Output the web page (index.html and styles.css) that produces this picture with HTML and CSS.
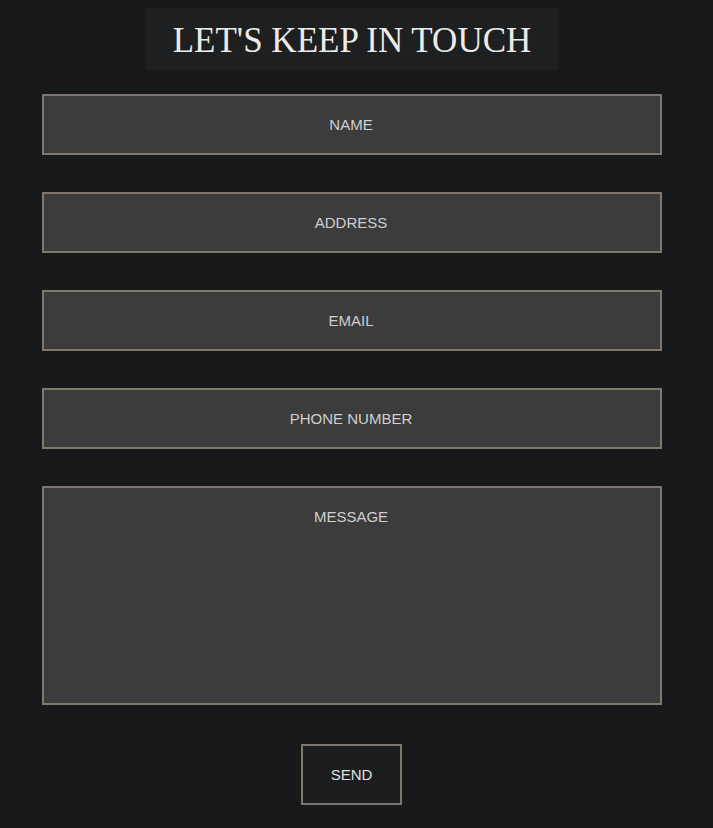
FILE: index.html
```html
<!DOCTYPE html>
<html>
<head>
<meta charset="utf-8">
<link rel="stylesheet" href="styles.css">
</head>
<body>
<div class="page">
  <div class="title-wrap">
    <h1 class="title">LET'S KEEP IN TOUCH</h1>
  </div>
  <form class="form">
    <input class="field" type="text" placeholder="NAME">
    <input class="field" type="text" placeholder="ADDRESS">
    <input class="field" type="text" placeholder="EMAIL">
    <input class="field" type="text" placeholder="PHONE NUMBER">
    <textarea class="field message" placeholder="MESSAGE"></textarea>
    <div class="actions">
      <button class="send" type="button">SEND</button>
    </div>
  </form>
</div>
</body>
</html>
```
FILE: styles.css
```css
html, body {
  margin: 0;
  padding: 0;
  background: #18191b;
}
.page {
  width: 620px;
  margin-left: 42px;
  padding-top: 8px;
  font-family: "Liberation Sans", Arial, sans-serif;
}
.title-wrap {
  display: flex;
  justify-content: center;
}
.title {
  margin: 0;
  height: 62px;
  box-sizing: border-box;
  padding: 2px 0 0;
  background: #1e1f21;
  font-family: "Liberation Serif", "Times New Roman", serif;
  font-weight: normal;
  font-size: 35px;
  line-height: 62px;
  color: #ecebe6;
  width: 414px;
  text-align: center;
  white-space: nowrap;
}
.form {
  margin-top: 24px;
  display: flex;
  flex-direction: column;
  gap: 37px;
}
.field {
  display: block;
  width: 620px;
  height: 61px;
  box-sizing: border-box;
  margin: 0;
  border: 2px solid #7f776b;
  background: #3c3c3c;
  color: #d0d0d0;
  font-family: "Liberation Sans", Arial, sans-serif;
  font-size: 15px;
  text-align: center;
  outline: none;
  padding: 0 12px 0 10px;
}
.field::placeholder {
  color: #cfcfcf;
  opacity: 1;
}
.message {
  height: 219px;
  padding-top: 20px;
  resize: none;
  line-height: 17px;
}
.actions {
  display: flex;
  justify-content: center;
  padding-top: 2px;
}
.send {
  width: 101px;
  height: 61px;
  box-sizing: border-box;
  border: 2px solid #7f776b;
  background: #1c1d1f;
  color: #e0e0e0;
  font-family: "Liberation Sans", Arial, sans-serif;
  font-size: 15px;
  margin-right: 1px;
  padding: 0;
  cursor: pointer;
}
```
